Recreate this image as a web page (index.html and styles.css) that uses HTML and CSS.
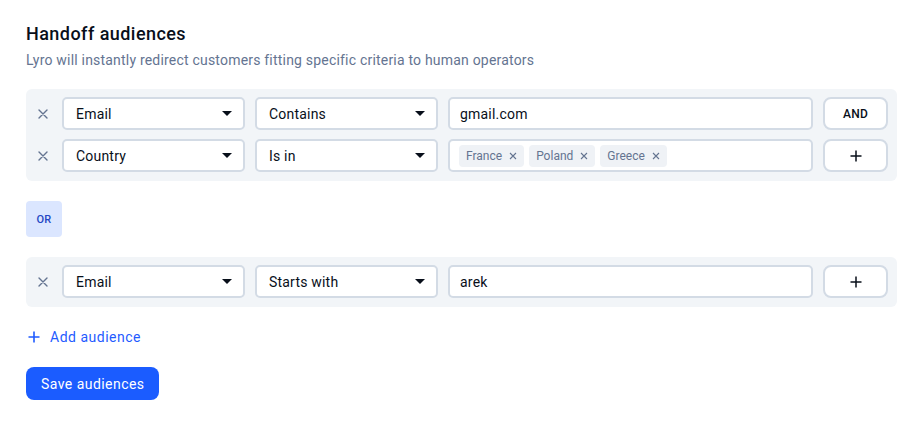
FILE: index.html
```html
<!DOCTYPE html>
<html>
<head>
<meta charset="utf-8">
<link rel="stylesheet" href="styles.css">
</head>
<body>
<div class="page">
  <h1 class="title">Handoff audiences</h1>
  <p class="subtitle">Lyro will instantly redirect customers fitting specific criteria to human operators</p>

  <div class="group">
    <div class="row">
      <button class="remove" aria-label="Remove"><svg width="10" height="10" viewBox="0 0 10 10"><path d="M1 1L9 9M9 1L1 9" stroke="#647491" stroke-width="1.4" stroke-linecap="round"/></svg></button>
      <div class="select"><span>Email</span><svg class="caret" width="10" height="5" viewBox="0 0 10 5"><path d="M0 0H10L5 5Z" fill="#080f1a"/></svg></div>
      <div class="select"><span>Contains</span><svg class="caret" width="10" height="5" viewBox="0 0 10 5"><path d="M0 0H10L5 5Z" fill="#080f1a"/></svg></div>
      <div class="input">gmail.com</div>
      <button class="btn btn-and">AND</button>
    </div>
    <div class="row">
      <button class="remove" aria-label="Remove"><svg width="10" height="10" viewBox="0 0 10 10"><path d="M1 1L9 9M9 1L1 9" stroke="#647491" stroke-width="1.4" stroke-linecap="round"/></svg></button>
      <div class="select"><span>Country</span><svg class="caret" width="10" height="5" viewBox="0 0 10 5"><path d="M0 0H10L5 5Z" fill="#080f1a"/></svg></div>
      <div class="select"><span>Is in</span><svg class="caret" width="10" height="5" viewBox="0 0 10 5"><path d="M0 0H10L5 5Z" fill="#080f1a"/></svg></div>
      <div class="input tags">
        <span class="tag">France<svg width="8" height="8" viewBox="0 0 8 8"><path d="M1 1L7 7M7 1L1 7" stroke="#647491" stroke-width="1.1"/></svg></span>
        <span class="tag">Poland<svg width="8" height="8" viewBox="0 0 8 8"><path d="M1 1L7 7M7 1L1 7" stroke="#647491" stroke-width="1.1"/></svg></span>
        <span class="tag">Greece<svg width="8" height="8" viewBox="0 0 8 8"><path d="M1 1L7 7M7 1L1 7" stroke="#647491" stroke-width="1.1"/></svg></span>
      </div>
      <button class="btn" aria-label="Add"><svg width="12" height="12" viewBox="0 0 12 12"><path d="M6 0.5V11.5M0.5 6H11.5" stroke="#080f1a" stroke-width="1.5"/></svg></button>
    </div>
  </div>

  <div class="or">OR</div>

  <div class="group">
    <div class="row">
      <button class="remove" aria-label="Remove"><svg width="10" height="10" viewBox="0 0 10 10"><path d="M1 1L9 9M9 1L1 9" stroke="#647491" stroke-width="1.4" stroke-linecap="round"/></svg></button>
      <div class="select"><span>Email</span><svg class="caret" width="10" height="5" viewBox="0 0 10 5"><path d="M0 0H10L5 5Z" fill="#080f1a"/></svg></div>
      <div class="select"><span>Starts with</span><svg class="caret" width="10" height="5" viewBox="0 0 10 5"><path d="M0 0H10L5 5Z" fill="#080f1a"/></svg></div>
      <div class="input">arek</div>
      <button class="btn" aria-label="Add"><svg width="12" height="12" viewBox="0 0 12 12"><path d="M6 0.5V11.5M0.5 6H11.5" stroke="#080f1a" stroke-width="1.5"/></svg></button>
    </div>
  </div>

  <button class="add-audience"><svg width="12" height="12" viewBox="0 0 12 12"><path d="M6 0.5V11.5M0.5 6H11.5" stroke="#1f5bff" stroke-width="1.6"/></svg><span>Add audience</span></button>

  <button class="save">Save audiences</button>
</div>
</body>
</html>
```

FILE: styles.css
```css
* { box-sizing: border-box; }
html, body { margin: 0; padding: 0; background: #fff; }
body {
  font-family: "Roboto", "Liberation Sans", sans-serif;
  color: #080f1a;
  font-size: 14px;
  letter-spacing: 0.2px;
}
button { font-family: inherit; letter-spacing: inherit; cursor: pointer; }
.page {
  padding: 22px 25px 0 26px;
  display: flex;
  flex-direction: column;
  align-items: flex-start;
}
.title {
  margin: 0;
  font-size: 18px;
  line-height: 24px;
  font-weight: 500;
  letter-spacing: 0.45px;
}
.subtitle {
  margin: 4px 0 0;
  font-size: 14px;
  line-height: 20px;
  color: #647491;
}
.group {
  align-self: stretch;
  margin-top: 19px;
  background: #f2f5f8;
  border-radius: 6px;
  padding: 8px 9px 9px 8px;
  display: flex;
  flex-direction: column;
  gap: 9px;
}
.row {
  display: grid;
  grid-template-columns: 18px 183px 183px 1fr 65px;
  column-gap: 10px;
  height: 33px;
}
.remove {
  border: 0;
  background: none;
  padding: 0;
  display: flex;
  align-items: center;
  justify-content: center;
}
.select, .input {
  background: #fff;
  border: 2px solid #d3dbe5;
  border-radius: 5px;
  display: flex;
  align-items: center;
  font-size: 14px;
}
.select {
  padding: 0 11px 0 12px;
  justify-content: space-between;
}
.input { padding: 0 10px; }
.tags { padding: 0 9px; gap: 5px; }
.tag {
  display: inline-flex;
  align-items: center;
  gap: 7px;
  height: 22px;
  padding: 0 7px;
  background: #eff2f6;
  border-radius: 4px;
  font-size: 12px;
  letter-spacing: 0;
  color: #647491;
}
.btn {
  background: #fff;
  border: 2px solid #d3dbe5;
  border-radius: 8px;
  display: flex;
  align-items: center;
  justify-content: center;
  padding: 0;
  color: #080f1a;
}
.btn-and {
  font-size: 12px;
  font-weight: 500;
  letter-spacing: 0.3px;
}
.or {
  margin-top: 20px;
  width: 36px;
  height: 36px;
  border-radius: 4px;
  background: #dbe6ff;
  color: #2447c4;
  font-size: 11px;
  font-weight: 500;
  display: flex;
  align-items: center;
  justify-content: center;
}
.or + .group { margin-top: 20px; }
.add-audience {
  margin-top: 20px;
  border: 0;
  background: none;
  padding: 0 0 0 2px;
  height: 20px;
  display: flex;
  align-items: center;
  gap: 10px;
  color: #1f5bff;
  font-size: 14px;
  letter-spacing: 0.5px;
}
.save {
  margin-top: 20px;
  height: 33px;
  padding: 0 15px;
  border: 0;
  border-radius: 8px;
  background: #1b5cff;
  color: #fff;
  font-size: 14px;
  letter-spacing: 0.45px;
}
```
